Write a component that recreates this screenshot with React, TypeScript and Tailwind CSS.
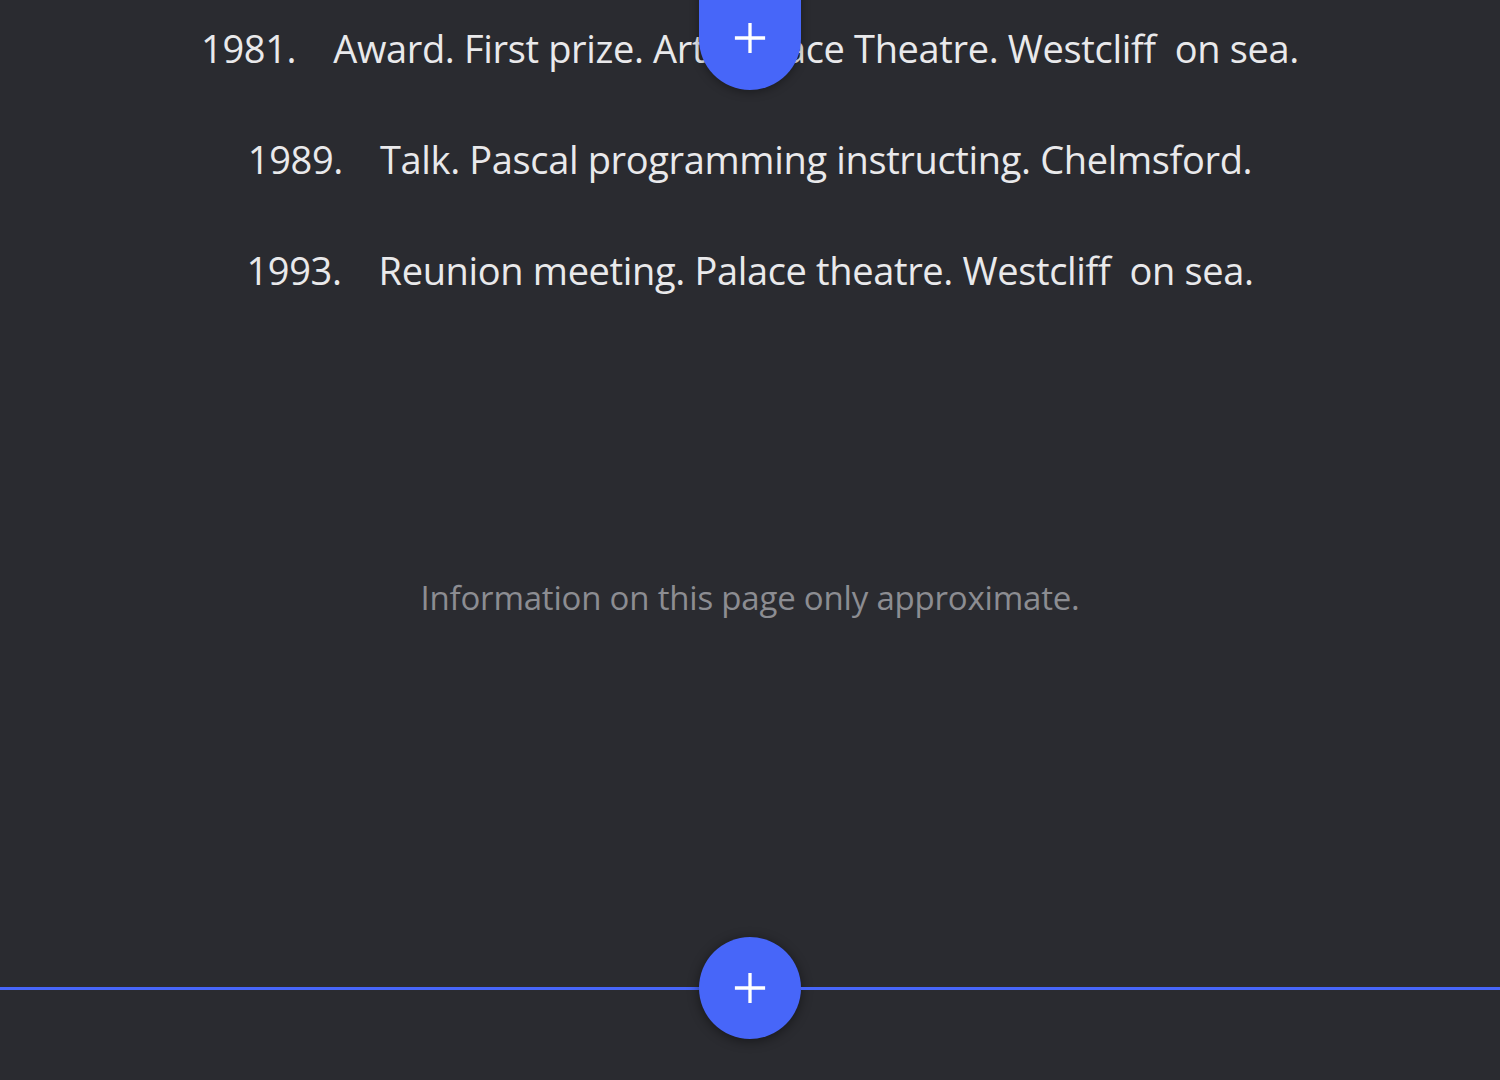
const entries = [
  { year: "1981.", text: "Award. First prize. Arts Palace Theatre. Westcliff\u00a0 on sea." },
  { year: "1989.", text: "Talk. Pascal programming instructing. Chelmsford." },
  { year: "1993.", text: "Reunion meeting. Palace theatre. Westcliff\u00a0 on sea." },
];

const Plus = ({ size = 36 }: { size?: number }) => (
  <svg width={size} height={size} viewBox="0 0 36 36" fill="none">
    <path d="M18 2v32M2 18h32" stroke="white" strokeWidth="3.5" />
  </svg>
);

export default function App() {
  return (
    <div
      className="relative h-[1080px] w-full overflow-hidden bg-[#2a2b30]"
      style={{ fontFamily: '"Open Sans", "Liberation Sans", sans-serif' }}
    >
      {/* entries */}
      <div className="flex flex-col items-center gap-[51px] pt-[18px]">
        {entries.map((e) => (
          <div key={e.year} className="flex h-[60px] items-center gap-[37px] text-[38px] tracking-[-0.35px] text-[#e9e9eb]">
            <span>{e.year}</span>
            <span>{e.text}</span>
          </div>
        ))}
      </div>

      <p className="mt-[273px] text-center text-[33px] tracking-[-0.2px] text-[#8c8d92]">
        Information on this page only approximate.
      </p>

      {/* add block button (top, over the text) */}
      <button className="absolute left-1/2 top-[-62px] flex h-[152px] w-[102px] -translate-x-1/2 items-end justify-center rounded-full bg-[#4766f9] pb-[35px] shadow-[0_2px_10px_rgba(0,0,0,0.35)]">
        <Plus size={34} />
      </button>

      {/* insert line at bottom */}
      <div className="absolute left-0 right-0 top-[937px] flex h-[102px] items-center">
        <div className="h-[3px] flex-1 bg-[#4766f9]" />
        <button className="flex h-[102px] w-[102px] items-center justify-center rounded-full bg-[#4766f9] shadow-[0_2px_12px_rgba(0,0,0,0.45)]">
          <Plus size={34} />
        </button>
        <div className="h-[3px] flex-1 bg-[#4766f9]" />
      </div>
    </div>
  );
}
